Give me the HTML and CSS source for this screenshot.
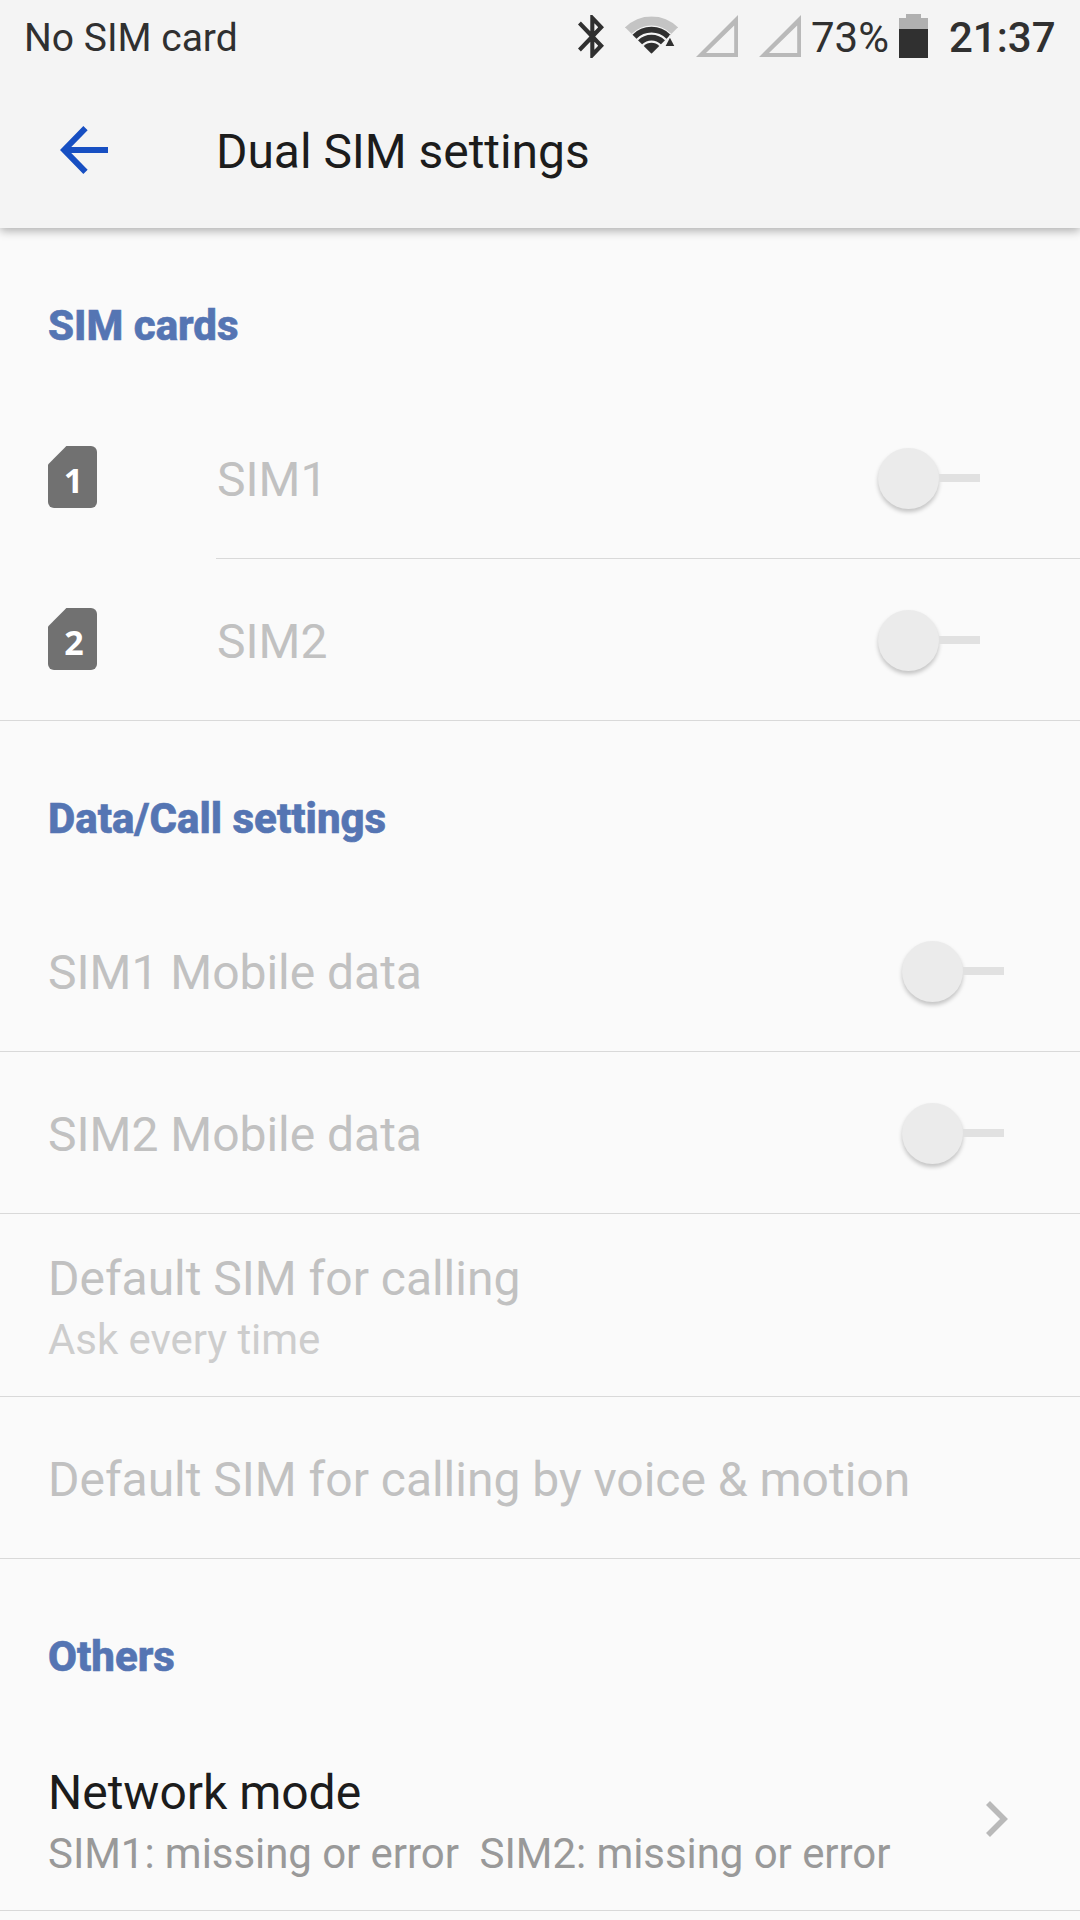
FILE: index.html
```html
<!DOCTYPE html>
<html lang="en">
<head>
    <meta charset="UTF-8" />
    <meta name="viewport" content="width=device-width, initial-scale=1.0" />
    <title>Dual SIM settings</title>
    <link rel="stylesheet" href="styles.css">
</head>
<body>
    <header class="header">
        <div class="status-bar">
            <span class="carrier">No SIM card</span>
            <svg class="bluetooth" viewBox="5 2 12.71 20" preserveAspectRatio="none">
                <path d="M17.71 7.71L12 2h-1v7.59L6.41 5 5 6.41 10.59 12 5 17.59 6.41 19 11 14.41V22h1l5.71-5.71-4.3-4.29 4.3-4.29zM13 5.83l1.88 1.88L13 9.59V5.83zm1.88 10.46L13 18.17v-3.76l1.88 1.88z"/>
            </svg>
            <svg class="wifi" viewBox="0 0 54 38">
                <clipPath id="fan"><path d="M27 38L-11 0h76z"/></clipPath>
                <g clip-path="url(#fan)">
                    <circle cx="27" cy="38" r="38" fill="#c4c4c4"/>
                    <circle cx="27" cy="38" r="28.6" fill="#f4f4f4"/>
                    <circle cx="27" cy="38" r="24.5" fill="none" stroke="#303030" stroke-width="5.8"/>
                    <circle cx="27" cy="38" r="16.4" fill="none" stroke="#303030" stroke-width="5.8"/>
                    <circle cx="27" cy="38" r="11.2"/>
                </g>
                <path d="M45.8 18.5l-7 13h14z" fill="#f4f4f4"/>
                <path d="M45.8 21.7l-4.4 8.4h8.8z"/>
            </svg>
            <svg class="signal signal-1" viewBox="0 0 42 42">
                <path d="M0 42L42 0v42zM10 38h28.2V10.5z" fill-rule="evenodd"/>
            </svg>
            <svg class="signal signal-2" viewBox="0 0 42 42">
                <path d="M0 42L42 0v42zM10 38h28.2V10.5z" fill-rule="evenodd"/>
            </svg>
            <span class="percent">73%</span>
            <svg class="battery" viewBox="0 0 29 44">
                <path d="M7 0h15v4h7v11H0V4h7z" fill="#b0b0b0"/>
                <path d="M0 15h29v29H0z"/>
            </svg>
            <span class="clock">21:37</span>
        </div>
        <div class="toolbar">
            <svg class="back" viewBox="0 0 48 48">
                <path d="M25.5 2.1L4.2 24l21.3 21.9M4 24h44"/>
            </svg>
            <h1>Dual SIM settings</h1>
        </div>
    </header>

    <main>
        <section>
            <h2>SIM cards</h2>
            <div class="row with-icon disabled">
                <svg class="sim" viewBox="0 0 49 62">
                    <path d="M18.4 0H43a6 6 0 0 1 6 6v50a6 6 0 0 1-6 6H6a6 6 0 0 1-6-6V18.4z"/>
                    <text x="25.5" y="46.6">1</text>
                </svg>
                <div class="row-body">
                    <div class="title">SIM1</div>
                    <div class="toggle"><span class="thumb"></span><span class="track"></span></div>
                </div>
            </div>
            <div class="row with-icon disabled last">
                <svg class="sim" viewBox="0 0 49 62">
                    <path d="M18.4 0H43a6 6 0 0 1 6 6v50a6 6 0 0 1-6 6H6a6 6 0 0 1-6-6V18.4z"/>
                    <text x="26" y="46.6">2</text>
                </svg>
                <div class="row-body">
                    <div class="title">SIM2</div>
                    <div class="toggle"><span class="thumb"></span><span class="track"></span></div>
                </div>
            </div>
        </section>

        <section>
            <h2>Data/Call settings</h2>
            <div class="row disabled">
                <div class="title">SIM1 Mobile data</div>
                <div class="toggle"><span class="thumb"></span><span class="track"></span></div>
            </div>
            <div class="row disabled">
                <div class="title">SIM2 Mobile data</div>
                <div class="toggle"><span class="thumb"></span><span class="track"></span></div>
            </div>
            <div class="row two-line disabled">
                <div>
                    <div class="title">Default SIM for calling</div>
                    <div class="summary">Ask every time</div>
                </div>
            </div>
            <div class="row disabled">
                <div class="title">Default SIM for calling by voice &amp; motion</div>
            </div>
        </section>

        <section>
            <h2>Others</h2>
            <div class="row two-line">
                <div>
                    <div class="title">Network mode</div>
                    <div class="summary">SIM1: missing or error&nbsp; SIM2: missing or error</div>
                </div>
                <svg class="chevron" viewBox="0 0 22 36">
                    <path d="M2 2l16 16L2 34"/>
                </svg>
            </div>
        </section>
    </main>
</body>
</html>
```
FILE: styles.css
```css
* {
    margin: 0;
    padding: 0;
    box-sizing: border-box;
}

body {
    font-family: Roboto, sans-serif;
    background-color: #fafafa;
    color: #1c1c1c;
    height: 1920px;
    overflow: hidden;
}

svg {
    display: block;
    flex: none;
    fill: #303030;
}

.header {
    height: 228px;
    background: #f4f4f4;
    box-shadow: 0 3px 9px rgba(0,0,0,0.3);
}

.status-bar {
    display: flex;
    align-items: flex-start;
    height: 72px;
    padding: 0 24px;
    color: #303030;
    line-height: 50px;
    white-space: nowrap;
}

.carrier {
    flex: 1;
    padding-top: 13px;
    font-size: 39px;
}

.bluetooth {
    width: 26px;
    height: 43px;
    margin-top: 15px;
    margin-right: 21px;
}

.wifi {
    width: 53px;
    height: 38px;
    margin-top: 16px;
    margin-right: 18px;
}

.signal {
    width: 42px;
    height: 42px;
    margin-top: 15px;
    fill: #b9b9b9;
}

.signal-1 {
    margin-right: 21px;
}

.signal-2 {
    margin-right: 10px;
}

.percent {
    width: 80px;
    margin-right: 8px;
    padding-top: 13px;
    font-size: 42px;
}

.battery {
    width: 29px;
    height: 44px;
    margin-top: 14px;
    margin-right: 21px;
}

.clock {
    width: 107px;
    padding-top: 13px;
    font-size: 42px;
    font-weight: 500;
}

.toolbar {
    display: flex;
    align-items: center;
    height: 156px;
    padding-left: 60px;
}

.back {
    width: 48px;
    height: 48px;
    margin-right: 108px;
    fill: none;
    stroke: #174fc2;
    stroke-width: 6;
}

h1 {
    padding-top: 3px;
    font-size: 48px;
    font-weight: 400;
    line-height: 56px;
    letter-spacing: -0.05px;
}

h2 {
    height: 169px;
    padding: 73px 48px 0;
    color: #5575b3;
    font-size: 42px;
    font-weight: 800;
    line-height: 50px;
    -webkit-text-stroke: 0.6px #5575b3;
}

.row {
    display: flex;
    justify-content: space-between;
    height: 162px;
    padding: 55px 76px 0 48px;
    border-bottom: 1px solid #d9d9d9;
}

.two-line {
    height: 183px;
    padding-top: 37px;
}

.title {
    font-size: 48px;
    line-height: 56px;
    letter-spacing: -0.02px;
}

.summary {
    color: #999;
    font-size: 42px;
    line-height: 66px;
    letter-spacing: -0.06px;
}

.disabled .title {
    color: #c1c1c1;
}

.disabled .summary {
    color: #cdcdcd;
}

/* rows with a leading SIM icon: the divider starts at the text */
.with-icon {
    padding: 0 0 0 48px;
    border-bottom: none;
}

.with-icon .row-body {
    display: flex;
    justify-content: space-between;
    width: 864px;
    padding: 55px 100px 0 1px;
    border-bottom: 1px solid #d9d9d9;
}

.with-icon.last {
    border-bottom: 1px solid #d9d9d9;
}

.with-icon.last .row-body {
    border-bottom: none;
}

.sim {
    width: 49px;
    height: 62px;
    margin-top: 49px;
    fill: #717171;
}

.sim text {
    fill: #fff;
    font-family: "Open Sans", sans-serif;
    font-size: 34px;
    font-weight: 700;
    text-anchor: middle;
}

.toggle {
    display: flex;
    align-items: center;
    height: 62px;
    margin-top: -5px;
}

.thumb {
    width: 61px;
    height: 61px;
    border-radius: 50%;
    background: #ebebeb;
    box-shadow: 0 3px 4px rgba(0,0,0,0.22);
}

.track {
    width: 41px;
    height: 8px;
    background: #e1e1e1;
}

.chevron {
    width: 22px;
    height: 36px;
    margin-top: 36px;
    margin-right: -4px;
    fill: none;
    stroke: #b9b9b9;
    stroke-width: 5.6;
}
```
